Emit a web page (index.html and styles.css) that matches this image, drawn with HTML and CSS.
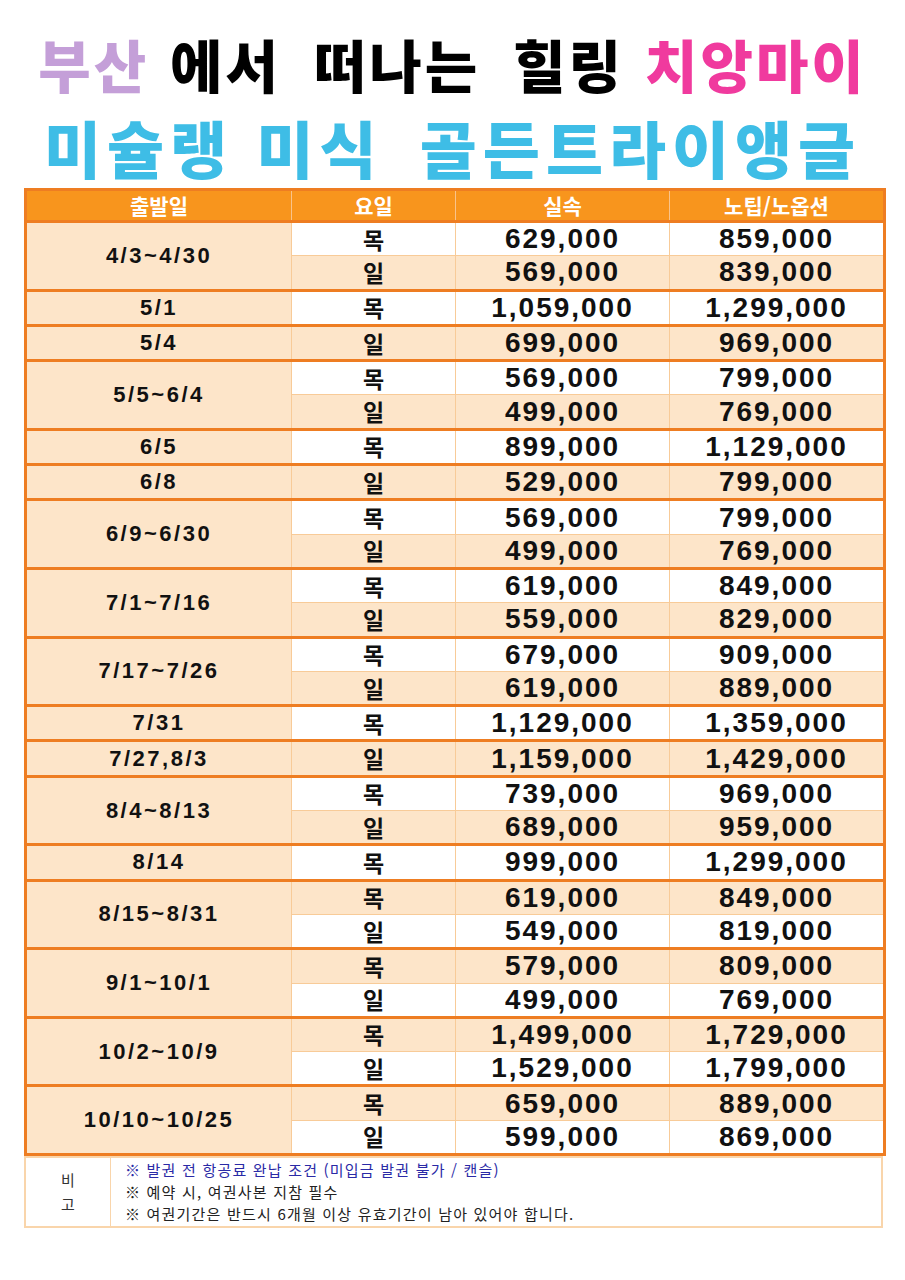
FILE: index.html
```html
<!DOCTYPE html>
<html lang="ko">
<head>
<meta charset="utf-8">
<title>부산에서 떠나는 힐링 치앙마이</title>
<link rel="stylesheet" href="styles.css">
</head>
<body>
<div class="page">
  <header class="title">
    <div class="line1"><span class="lilac">부산</span> 에서 <span class="w2">떠나는</span> 힐링 <span class="pink">치앙마이</span></div>
    <div class="line2">미슐랭 <span class="w2">미식</span> 골든트라이앵글</div>
  </header>

  <table class="price">
    <colgroup>
      <col class="c1"><col class="c2"><col class="c3"><col class="c4">
    </colgroup>
    <thead>
      <tr><th>출발일</th><th>요일</th><th>실속</th><th>노팁/노옵션</th></tr>
    </thead>
    <tbody>
      <tr><td rowspan="2" class="date">4/3~4/30</td><td class="day">목</td><td>629,000</td><td>859,000</td></tr>
      <tr class="alt"><td class="day">일</td><td>569,000</td><td>839,000</td></tr>
    </tbody>
    <tbody>
      <tr><td class="date">5/1</td><td class="day">목</td><td>1,059,000</td><td>1,299,000</td></tr>
    </tbody>
    <tbody>
      <tr class="alt"><td class="date">5/4</td><td class="day">일</td><td>699,000</td><td>969,000</td></tr>
    </tbody>
    <tbody>
      <tr><td rowspan="2" class="date">5/5~6/4</td><td class="day">목</td><td>569,000</td><td>799,000</td></tr>
      <tr class="alt"><td class="day">일</td><td>499,000</td><td>769,000</td></tr>
    </tbody>
    <tbody>
      <tr><td class="date">6/5</td><td class="day">목</td><td>899,000</td><td>1,129,000</td></tr>
    </tbody>
    <tbody>
      <tr class="alt"><td class="date">6/8</td><td class="day">일</td><td>529,000</td><td>799,000</td></tr>
    </tbody>
    <tbody>
      <tr><td rowspan="2" class="date">6/9~6/30</td><td class="day">목</td><td>569,000</td><td>799,000</td></tr>
      <tr class="alt"><td class="day">일</td><td>499,000</td><td>769,000</td></tr>
    </tbody>
    <tbody>
      <tr><td rowspan="2" class="date">7/1~7/16</td><td class="day">목</td><td>619,000</td><td>849,000</td></tr>
      <tr class="alt"><td class="day">일</td><td>559,000</td><td>829,000</td></tr>
    </tbody>
    <tbody>
      <tr><td rowspan="2" class="date">7/17~7/26</td><td class="day">목</td><td>679,000</td><td>909,000</td></tr>
      <tr class="alt"><td class="day">일</td><td>619,000</td><td>889,000</td></tr>
    </tbody>
    <tbody>
      <tr><td class="date">7/31</td><td class="day">목</td><td>1,129,000</td><td>1,359,000</td></tr>
    </tbody>
    <tbody>
      <tr class="alt"><td class="date">7/27,8/3</td><td class="day">일</td><td>1,159,000</td><td>1,429,000</td></tr>
    </tbody>
    <tbody>
      <tr><td rowspan="2" class="date">8/4~8/13</td><td class="day">목</td><td>739,000</td><td>969,000</td></tr>
      <tr class="alt"><td class="day">일</td><td>689,000</td><td>959,000</td></tr>
    </tbody>
    <tbody>
      <tr><td class="date">8/14</td><td class="day">목</td><td>999,000</td><td>1,299,000</td></tr>
    </tbody>
    <tbody>
      <tr class="alt"><td rowspan="2" class="date">8/15~8/31</td><td class="day">목</td><td>619,000</td><td>849,000</td></tr>
      <tr><td class="day">일</td><td>549,000</td><td>819,000</td></tr>
    </tbody>
    <tbody>
      <tr class="alt"><td rowspan="2" class="date">9/1~10/1</td><td class="day">목</td><td>579,000</td><td>809,000</td></tr>
      <tr><td class="day">일</td><td>499,000</td><td>769,000</td></tr>
    </tbody>
    <tbody>
      <tr class="alt"><td rowspan="2" class="date">10/2~10/9</td><td class="day">목</td><td>1,499,000</td><td>1,729,000</td></tr>
      <tr><td class="day">일</td><td>1,529,000</td><td>1,799,000</td></tr>
    </tbody>
    <tbody>
      <tr class="alt"><td rowspan="2" class="date">10/10~10/25</td><td class="day">목</td><td>659,000</td><td>889,000</td></tr>
      <tr><td class="day">일</td><td>599,000</td><td>869,000</td></tr>
    </tbody>
  </table>

  <table class="notes">
    <tr>
      <td class="label">비<br>고</td>
      <td class="body">
        <p class="blue">※ 발권 전 항공료 완납 조건 (미입금 발권 불가 / 캔슬)</p>
        <p>※ 예약 시, 여권사본 지참 필수</p>
        <p>※ 여권기간은 반드시 6개월 이상 유효기간이 남아 있어야 합니다.</p>
      </td>
    </tr>
  </table>
</div>
</body>
</html>
```

FILE: styles.css
```css
html, body {
  margin: 0;
  padding: 0;
  background: #ffffff;
}

.page {
  width: 905px;
  height: 1280px;
  padding-top: 31px;
  box-sizing: border-box;
}

.title {
  font-family: "Noto Sans CJK KR", sans-serif;
  font-weight: 900;
  text-align: center;
}

.line1 {
  font-size: 57px;
  color: #000000;
  word-spacing: 2px;
  letter-spacing: 3px;
  height: 64px;
  line-height: 64px;
}

.line1 .w2 {
  margin: 0 12px;
}

.lilac { color: #c49fd8; }
.pink { color: #f03a9e; }

.line2 {
  font-size: 62px;
  color: #3ebde6;
  letter-spacing: 6px;
  word-spacing: 0;
  margin-top: 17px;
  height: 70px;
  line-height: 70px;
}

.line2 .w2 {
  margin: 0 14px 0 0;
}

.price {
  border-collapse: collapse;
  width: 859px;
  margin: 6px 0 0 24px;
  table-layout: fixed;
  border: 3px solid #ee7d22;
  font-family: "Liberation Sans", "Noto Sans CJK KR", sans-serif;
  color: #111111;
}

.c1 { width: 266px; }
.c2 { width: 164px; }
.c3 { width: 214px; }
.c4 { width: 215px; }

.price th {
  background: #f8951d;
  color: #ffffff;
  font-family: "Noto Sans CJK KR", sans-serif;
  font-weight: 700;
  font-size: 21px;
  height: 29px;
  padding: 0;
  line-height: 1;
  border-left: 1px solid #f9c38b;
  border-bottom: 3px solid #ee7d22;
}

.price tbody {
  border-top: 3px solid #ee7d22;
}

.price td {
  height: 32.3px;
  padding: 0;
  text-align: center;
  vertical-align: middle;
  border: 1px solid #f8cb98;
  font-weight: 700;
  font-size: 28px;
  letter-spacing: 2px;
  line-height: 1;
  background: #ffffff;
}

.price tr.alt td {
  background: #fde5c9;
}

.price td.date,
.price tr.alt td.date {
  background: #fde5c9;
  font-size: 22px;
  letter-spacing: 2.5px;
}

.price td.day {
  font-family: "Noto Sans CJK KR", sans-serif;
  font-size: 23px;
  letter-spacing: 0;
}

.notes {
  border-collapse: collapse;
  width: 859px;
  margin-left: 24px;
  border: 2px solid #f9d5ab;
  font-family: "Noto Sans CJK KR", sans-serif;
}

.notes td {
  border: 1px solid #f9d5ab;
  padding: 0;
}

.notes .label {
  width: 84px;
  text-align: center;
  font-size: 15px;
  line-height: 24px;
  color: #333333;
}

.notes .body {
  padding: 1px 0 1px 14px;
}

.notes p {
  margin: 0;
  font-size: 15px;
  line-height: 22px;
  letter-spacing: 1.2px;
  color: #222222;
}

.notes p.blue {
  color: #2a2aa6;
}
```
